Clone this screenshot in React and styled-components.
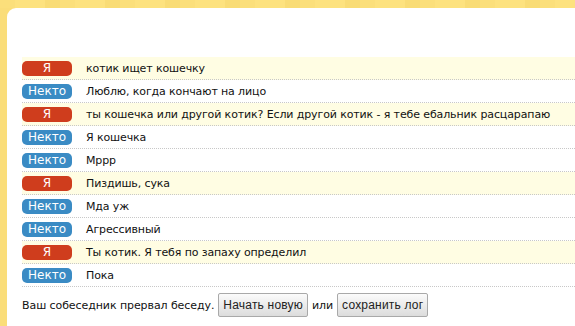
import React from "react";
import styled, { createGlobalStyle } from "styled-components";

const Global = createGlobalStyle`
  html, body { margin: 0; padding: 0; }
  body {
    width: 575px; height: 326px; overflow: hidden;
    background: #fadd79;
    font-family: "DejaVu Sans", Verdana, sans-serif;
  }
`;

const Page = styled.div`
  height: 326px;
  padding: 8px 0 0 7px;
  box-sizing: border-box;
  background:
    repeating-linear-gradient(90deg, #fbdf7b 0 15px, #fde27f 15px 45px, #f9dc76 45px 60px) top / 100% 8px no-repeat,
    #fadd79;
`;

const Panel = styled.div`
  background: #fff;
  border-top-left-radius: 9px;
  height: 100%;
  padding: 49px 0 0 15px;
  box-sizing: border-box;
`;

const Log = styled.div`
  display: flex;
  flex-direction: column;
`;

const Row = styled.div`
  display: flex;
  align-items: center;
  height: 22px;
  border-bottom: 1px dotted #c8c8c8;
  background: ${(p) => (p.$me ? "#fffde3" : "#fff")};
  white-space: nowrap;
`;

const Badge = styled.span`
  flex: none;
  width: 50px;
  height: 15px;
  margin-right: 14px;
  border-radius: 5px;
  background: ${(p) => (p.$me ? "#cf3d1d" : "#3a8bc4")};
  color: #fff;
  font-size: 12px;
  line-height: 15px;
  text-align: center;
`;

const Text = styled.span`
  font-size: 11px;
  letter-spacing: -0.12px;
  color: #111;
`;

const Footer = styled.div`
  display: flex;
  align-items: center;
  gap: 4px;
  margin-top: 6px;
  font-size: 11px;
  letter-spacing: -0.08px;
  color: #111;
  white-space: nowrap;
`;

const Button = styled.button`
  height: 24px;
  padding: 0 4px;
  border: 1px solid #a9a9a9;
  border-radius: 2px;
  background: linear-gradient(#fbfbfb, #dcdcdc);
  font-family: "Liberation Sans", Arial, sans-serif;
  font-size: 12px;
  letter-spacing: 0.2px;
  color: #222;
`;

const messages = [
  [true, "котик ищет кошечку"],
  [false, "Люблю, когда кончают на лицо"],
  [true, "ты кошечка или другой котик? Если другой котик - я тебе ебальник расцарапаю"],
  [false, "Я кошечка"],
  [false, "Мppp"],
  [true, "Пиздишь, сука"],
  [false, "Мда уж"],
  [false, "Агрессивный"],
  [true, "Ты котик. Я тебя по запаху определил"],
  [false, "Пока"],
];

export default function App() {
  return (
    <>
      <Global />
      <Page>
        <Panel>
          <Log>
            {messages.map(([me, t], i) => (
              <Row key={i} $me={me}>
                <Badge $me={me}>{me ? "Я" : "Некто"}</Badge>
                <Text>{t}</Text>
              </Row>
            ))}
          </Log>
          <Footer>
            <span>Ваш собеседник прервал беседу.</span>
            <Button>Начать новую</Button>
            <span>или</span>
            <Button>сохранить лог</Button>
          </Footer>
        </Panel>
      </Page>
    </>
  );
}
